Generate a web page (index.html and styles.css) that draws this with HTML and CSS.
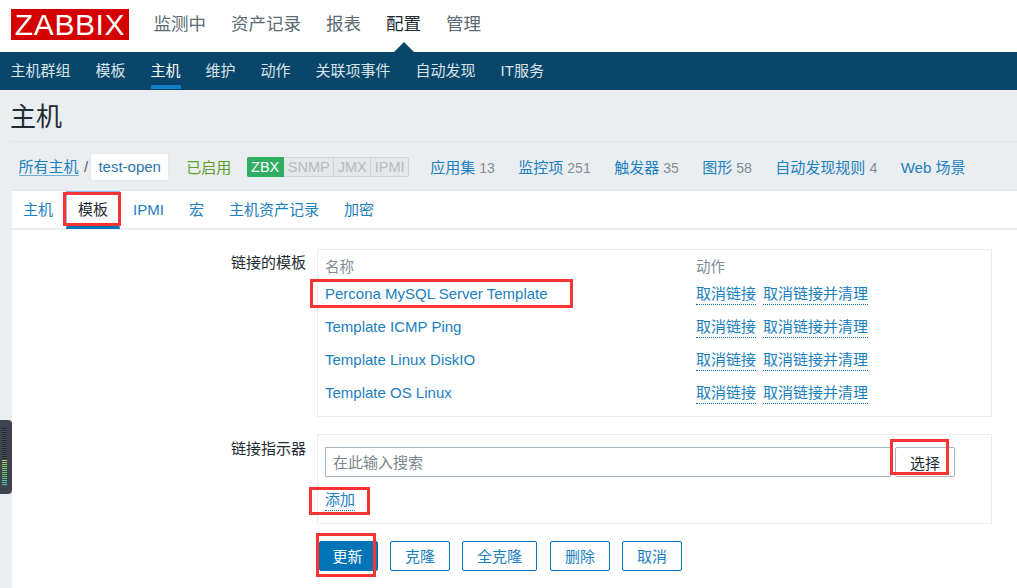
FILE: index.html
```html
<!DOCTYPE html>
<html lang="zh">
<head>
<meta charset="utf-8">
<title>主机</title>
<link rel="stylesheet" href="styles.css">
</head>
<body>
<div class="page">
  <header class="topbar">
    <div class="logo">ZABBIX</div>
    <nav class="topnav">
      <a>监测中</a><a>资产记录</a><a>报表</a><a class="on">配置</a><a>管理</a>
    </nav>
  </header>
  <nav class="subnav">
    <a>主机群组</a><a>模板</a><a class="on">主机</a><a>维护</a><a>动作</a><a>关联项事件</a><a>自动发现</a><a>IT服务</a>
  </nav>
  <main class="main">
    <h1 class="title">主机</h1>
    <div class="hostbar">
      <a class="crumb">所有主机</a><span class="sep">/</span><span class="current">test-open</span>
      <span class="status">已启用</span>
      <span class="avail"><b class="zbx">ZBX</b><b class="snmp">SNMP</b><b class="jmx">JMX</b><b class="ipmi">IPMI</b></span>
      <a class="hl first">应用集<i>13</i></a>
      <a class="hl">监控项<i>251</i></a>
      <a class="hl">触发器<i>35</i></a>
      <a class="hl">图形<i>58</i></a>
      <a class="hl">自动发现规则<i>4</i></a>
      <a class="hl">Web 场景</a>
    </div>
    <section class="panel">
      <div class="tabs">
        <a>主机</a><a class="on">模板</a><a>IPMI</a><a>宏</a><a>主机资产记录</a><a>加密</a>
      </div>
      <div class="form">
        <label class="lbl">链接的模板</label>
        <div class="box list">
          <div class="row head"><span class="name">名称</span><span>动作</span></div>
          <div class="row"><a class="name">Percona MySQL Server Template</a><span class="acts"><a class="dot">取消链接</a><a class="dot">取消链接并清理</a></span></div>
          <div class="row"><a class="name">Template ICMP Ping</a><span class="acts"><a class="dot">取消链接</a><a class="dot">取消链接并清理</a></span></div>
          <div class="row"><a class="name">Template Linux DiskIO</a><span class="acts"><a class="dot">取消链接</a><a class="dot">取消链接并清理</a></span></div>
          <div class="row"><a class="name">Template OS Linux</a><span class="acts"><a class="dot">取消链接</a><a class="dot">取消链接并清理</a></span></div>
        </div>
        <label class="lbl second">链接指示器</label>
        <div class="box link">
          <div class="search"><div class="input">在此输入搜索</div><button class="pick">选择</button></div>
          <a class="dot add">添加</a>
        </div>
        <div class="actions">
          <button class="btn primary">更新</button><button class="btn">克隆</button><button class="btn wide">全克隆</button><button class="btn">删除</button><button class="btn">取消</button>
        </div>
      </div>
    </section>
  </main>
  <div class="mark m1"></div>
  <div class="mark m2"></div>
  <div class="mark m3"></div>
  <div class="mark m4"></div>
  <div class="mark m5"></div>
  <div class="meter"><div class="bars dark"></div><div class="bars lit"></div></div>
</div>
</body>
</html>
```
FILE: styles.css
```css
* { box-sizing: border-box; }
html, body { margin: 0; padding: 0; }
body {
  width: 1017px;
  height: 588px;
  overflow: hidden;
  background: #ebeef0;
  font-family: "Liberation Sans", "Noto Sans CJK SC", sans-serif;
  font-size: 15px;
  color: #1f2c33;
}
a { color: #1a80c0; text-decoration: none; }
.page { position: relative; width: 1017px; height: 588px; overflow: hidden; }

.topbar { height: 52px; background: #fff; display: flex; padding: 9px 0 0 11px; }
.logo {
  width: 118px; height: 31px; background: #d40000; color: #fff;
  font-size: 30px; line-height: 32px; letter-spacing: 0.6px; text-align: center;
}
.topnav { display: flex; gap: 25px; margin-left: 24.5px; height: 30px; line-height: 30px; font-size: 17.5px; }
.topnav a { color: #5b6a73; }
.topnav a.on { color: #1f2c33; position: relative; height: 43px; }
.topnav a.on::after {
  content: ""; position: absolute; left: 50%; bottom: 0; margin-left: -10px;
  border: 10px solid transparent; border-top: 0; border-bottom-color: #0a466a;
}

.subnav { height: 38px; background: #0a466a; display: flex; gap: 25px; padding-left: 10.5px; }
.subnav a { color: #d8e3ea; line-height: 38px; height: 37px; }
.subnav a.on { color: #fff; border-bottom: 4px solid #0f7fc4; }

.main { height: 498px; }
.title {
  margin: 0 0 0 10px; height: 52px; line-height: 54px;
  font-size: 26px; font-weight: 400; color: #1f2c33; border-bottom: 1px solid #dfe4e7;
}
.hostbar { height: 48px; display: flex; align-items: center; padding: 1px 0 0 18.5px; white-space: nowrap; }
.crumb { border-bottom: 1px solid #6fb0da; line-height: 17px; }
.sep { margin: 0 3px 0 5.5px; color: #4a5a63; }
.current {
  background: #fff; height: 26px; line-height: 26px; width: 77px; text-align: center;
  border-radius: 2px; color: #2a76a8; box-shadow: 0 0 0 1px #e6e9eb;
}
.status { color: #59a12e; margin-left: 18px; }
.avail { display: flex; margin-left: 16px; height: 20px; font-size: 14.5px; }
.avail b {
  font-weight: 400; color: #b4bcc2; background: #e4e8ea; border: 1px solid #cdd3d7; border-left: 0;
  line-height: 18px; text-align: center;
}
.avail .zbx { width: 37px; background: #2fad63; border-color: #2fad63; color: #fff; border-radius: 2px 0 0 2px; }
.avail .snmp { width: 50px; }
.avail .jmx { width: 37px; }
.avail .ipmi { width: 38px; border-radius: 0 2px 2px 0; }
.hl { margin-left: 23.5px; }
.hl.first { margin-left: 21px; }
.hl i { font-style: normal; color: #7f8d96; font-size: 14px; margin-left: 4px; }

.panel { margin-left: 12px; height: 398px; background: #fff; border-top: 1px solid #e3e6e8; }
.tabs { display: flex; height: 39px; gap: 25px; padding-left: 11px; border-bottom: 2px solid #ebeef0; }
.tabs a { line-height: 37px; height: 38px; }
.tabs a.on {
  color: #1f2c33; padding: 0 11px; margin: 0 -12px;
  border: 1px solid #8fbcf5; border-bottom: 3px solid #0275b8; line-height: 35px;
}

.form {
  display: grid; grid-template-columns: 294px 675px; column-gap: 11px;
  padding-top: 19px; align-items: start;
}
.lbl { text-align: right; line-height: 28px; color: #1f2c33; }
.box { border: 1px solid #ebeef0; }
.list { height: 168px; padding: 5px 0 0 7px; }
.row { display: flex; height: 33px; line-height: 33px; }
.row.head { height: 22px; line-height: 25px; color: #7f8d96; font-size: 14.5px; }
.name { width: 371px; }
.acts { display: flex; gap: 7px; }
.dot { border-bottom: 1px dotted #0275b8; line-height: 18px; height: 20px; align-self: center; }
.acts .dot { margin-top: 2px; }
.second { margin-top: 17px; line-height: 30px; }
.link { margin-top: 17px; height: 90px; padding: 12px 7px 0; }
.search { display: flex; gap: 4px; }
.input {
  width: 566px; height: 30px; border: 1px solid #a9b7c2; line-height: 29px;
  padding-left: 7px; color: #7c858b; background: #fff;
}
.pick {
  width: 60px; height: 30px; border: 1px solid #a9b7c2; border-radius: 2px; background: #fff;
  font: inherit; color: #1f2c33; padding: 0;
}
.add { display: inline-block; margin-top: 14px; }
.actions { grid-column: 2; display: flex; gap: 12px; margin-top: 17px; padding-left: 2px; }
.btn {
  width: 60px; height: 30px; border: 1px solid #0275b8; border-radius: 2px; background: #fff;
  color: #1a80c0; font: inherit; padding: 0 0 2px;
}
.btn.wide { width: 75px; margin-right: 1px; }
.btn.primary { background: #0275b8; color: #fff; width: 59px; padding-right: 2px; }

.mark { position: absolute; border: 3px solid #fb3333; }
.m1 { left: 63px; top: 192px; width: 58px; height: 34px; }
.m2 { left: 310px; top: 279px; width: 263px; height: 29px; }
.m3 { left: 890px; top: 439px; width: 59px; height: 36px; }
.m4 { left: 309px; top: 487px; width: 61px; height: 28px; }
.m5 { left: 316px; top: 533px; width: 60px; height: 44px; }

.meter {
  position: absolute; left: 0; top: 420px; width: 12px; height: 74px;
  background: #3e4350; border-radius: 0 4px 4px 0; padding: 8px 0 0 2px;
}
.bars { width: 5px; }
.bars.dark { height: 32px; background: repeating-linear-gradient(#23262e 0 1px, #4b505c 1px 2px); }
.bars.lit {
  height: 26px;
  background:
    repeating-linear-gradient(transparent 0 1px, #3c4a52 1px 2px),
    linear-gradient(#b4c24a, #6fc36f 45%, #3fc7a8);
}
```
